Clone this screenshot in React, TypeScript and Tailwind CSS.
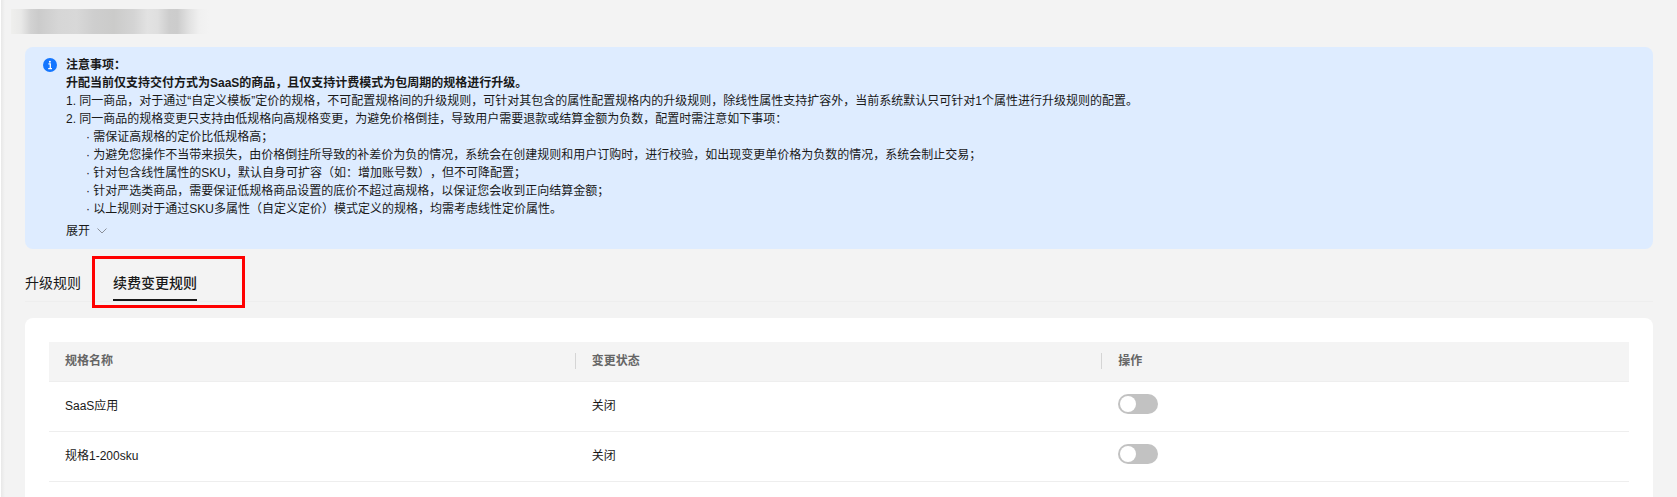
import { useState } from "react";

interface ISpec {
  name: string;
  enabled: boolean;
}

const tabs = ["升级规则", "续费变更规则"];

const subNotes = [
  "需保证高规格的定价比低规格高；",
  "为避免您操作不当带来损失，由价格倒挂所导致的补差价为负的情况，系统会在创建规则和用户订购时，进行校验，如出现变更单价格为负数的情况，系统会制止交易；",
  "针对包含线性属性的SKU，默认自身可扩容（如：增加账号数），但不可降配置；",
  "针对严选类商品，需要保证低规格商品设置的底价不超过高规格，以保证您会收到正向结算金额；",
  "以上规则对于通过SKU多属性（自定义定价）模式定义的规格，均需考虑线性定价属性。",
];

const InfoIcon = () => (
  <svg viewBox="0 0 14 14" className="w-[14px] h-[14px] shrink-0 mt-0.5" aria-hidden="true">
    <circle cx="7" cy="7" r="7" fill="#1476ff" />
    <circle cx="6.9" cy="3.7" r="1" fill="#fff" />
    <path d="M5.4 5.8H7.3V10.4M5.2 10.7H9" fill="none" stroke="#fff" strokeWidth="1.3" />
  </svg>
);

const Notice = () => (
  <section className="flex gap-[9px] rounded-lg bg-[#deecff] pl-[18px] pr-4 pt-[9px] pb-[9px] text-xs leading-[18px]">
    <InfoIcon />
    <div>
      <p className="font-bold">注意事项：</p>
      <p className="font-bold">升配当前仅支持交付方式为SaaS的商品，且仅支持计费模式为包周期的规格进行升级。</p>
      <p>1. 同一商品，对于通过“自定义模板”定价的规格，不可配置规格间的升级规则，可针对其包含的属性配置规格内的升级规则，除线性属性支持扩容外，当前系统默认只可针对1个属性进行升级规则的配置。</p>
      <p>2. 同一商品的规格变更只支持由低规格向高规格变更，为避免价格倒挂，导致用户需要退款或结算金额为负数，配置时需注意如下事项：</p>
      <ul className="pl-5">
        {subNotes.map((note) => (
          <li key={note}>· {note}</li>
        ))}
      </ul>
      <button type="button" className="mt-1 flex items-center gap-[7px]">
        展开
        <svg viewBox="0 0 10 6" className="w-[10px] h-[6px]" aria-hidden="true">
          <path d="M0.5 0.5L5 5L9.5 0.5" fill="none" stroke="#8a8f99" />
        </svg>
      </button>
    </div>
  </section>
);

const App = () => {
  const [activeTab, setActiveTab] = useState(1);
  const [specs, setSpecs] = useState<ISpec[]>([
    { name: "SaaS应用", enabled: false },
    { name: "规格1-200sku", enabled: false },
  ]);

  const handleToggle = (index: number) => {
    setSpecs((prev) => prev.map((s, i) => (i === index ? { ...s, enabled: !s.enabled } : s)));
  };

  return (
    <div className="min-h-screen border-l border-white bg-[#f3f3f3] bg-[linear-gradient(to_right,#e8e8e8,#f3f3f3_4px)] pl-6 pr-6 pt-[9px] font-['Liberation_Sans','Noto_Sans_CJK_SC',sans-serif] text-[#191919] [text-spacing-trim:space-all]">
      {/* hidden title */}
      <div className="-ml-[14px] mb-[13px] h-[25px] w-[198px] bg-[linear-gradient(to_right,#efefed,#e9e9e8_5%,#d2d2d2_10%,#cbcbcb_14%,#d6d6d6_24%,#d8d8d8_33%,#cecece_42%,#cbcbca_52%,#d4d4d4_62%,#e2e2e2_69%,#dfdfdf_74%,#cdcdcd_80%,#cccccc_84%,#e2e2e2_90%,#f0f0f0_95%,#f3f3f3)]" />

      <Notice />

      {/* tabs */}
      <div className="mt-5 flex gap-8 border-b border-[#eeeeee]" role="tablist">
        {tabs.map((tab, index) => (
          <div key={tab} className="relative">
            <button
              type="button"
              role="tab"
              aria-selected={activeTab === index}
              onClick={() => setActiveTab(index)}
              className={`block border-b-2 pt-1 pb-[6px] text-sm leading-5 ${activeTab === index ? "border-[#191919] font-medium" : "border-transparent"}`}
            >
              {tab}
            </button>
            {index === 1 && (
              <span className="pointer-events-none absolute -left-[21px] -top-[13px] h-[52px] w-[153px] border-3 border-[#ff0000]" />
            )}
          </div>
        ))}
      </div>

      {/* spec table */}
      <div className="mt-4 rounded-t-lg bg-white p-6">
        <table className="w-full table-fixed text-left text-xs">
          <thead>
            <tr className="h-[39px] border-b border-[#eeeeee] bg-[#f4f4f4] text-[#666666]">
              <th className="px-4 font-bold">规格名称</th>
              <th className="p-0 font-bold">
                <div className="-ml-px border-l border-[#d5d5d5] px-4 leading-4">变更状态</div>
              </th>
              <th className="p-0 font-bold">
                <div className="-ml-px border-l border-[#d5d5d5] px-4 leading-4">操作</div>
              </th>
            </tr>
          </thead>
          <tbody>
            {specs.map((spec, index) => (
              <tr key={spec.name} className="h-[50px] border-b border-[#eeeeee]">
                <td className="px-4">{spec.name}</td>
                <td className="px-4">{spec.enabled ? "开启" : "关闭"}</td>
                <td className="px-4 pb-1">
                  <input
                    type="checkbox"
                    role="switch"
                    aria-label={spec.name}
                    checked={spec.enabled}
                    onChange={() => handleToggle(index)}
                    className="block h-5 w-10 appearance-none rounded-full bg-[#c2c2c2] p-0.5 before:block before:size-4 before:rounded-full before:bg-white checked:bg-[#1476ff] checked:before:ml-5"
                  />
                </td>
              </tr>
            ))}
          </tbody>
        </table>
      </div>
    </div>
  );
};

export default App;
